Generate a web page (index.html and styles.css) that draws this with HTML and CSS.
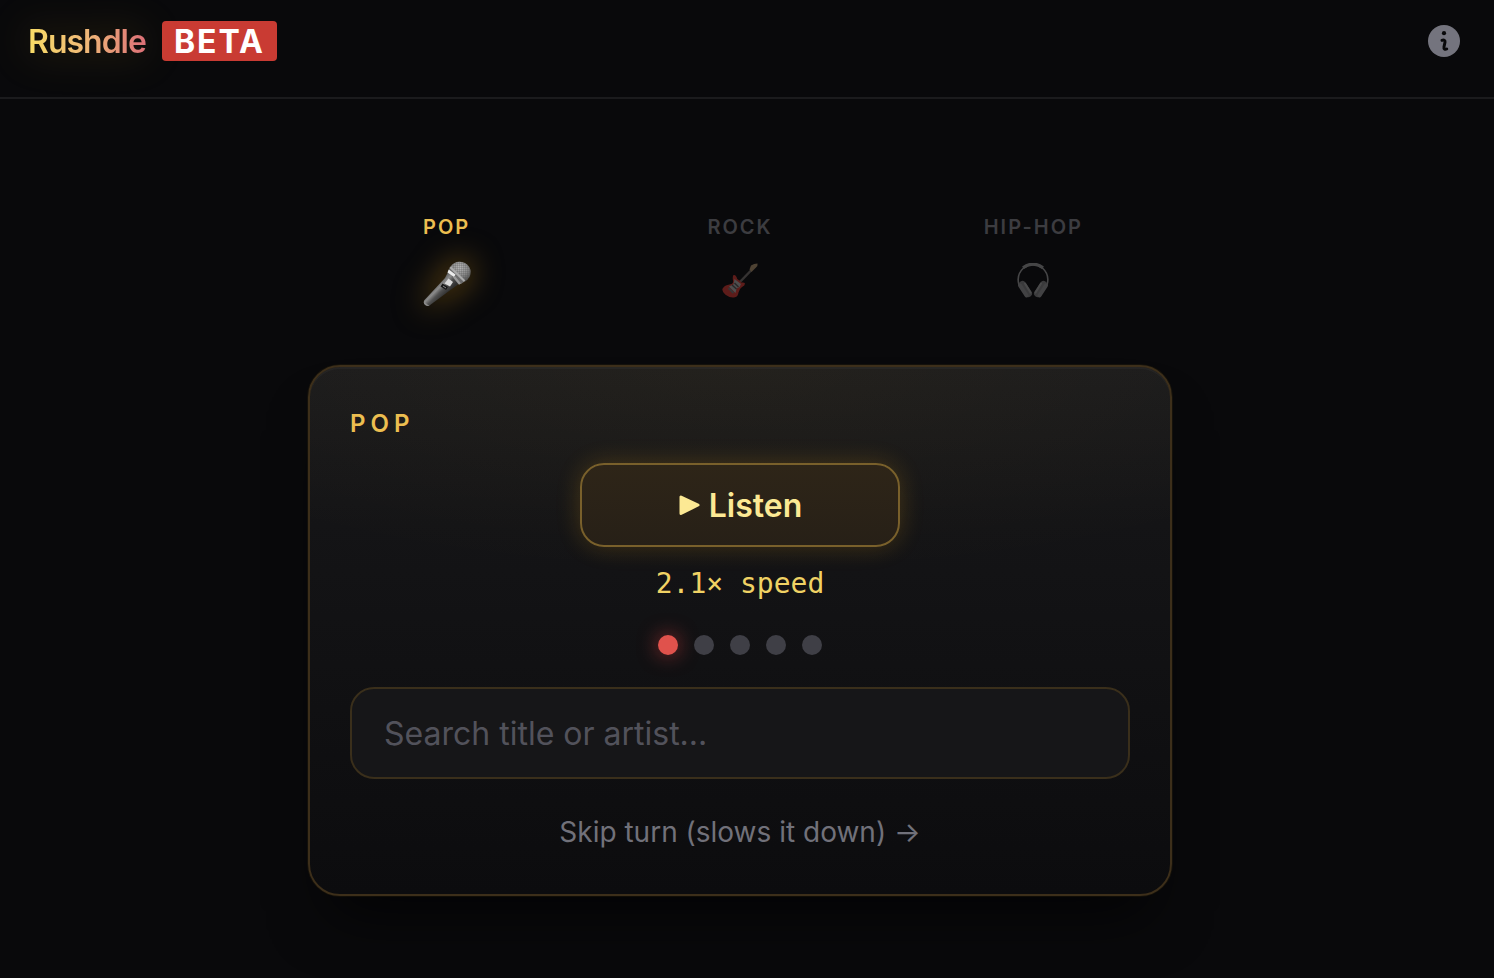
FILE: index.html
```html
<!DOCTYPE html>
<html lang="en">
<head>
<meta charset="utf-8">
<meta name="viewport" content="width=device-width, initial-scale=1">
<title>Rushdle</title>
<link rel="stylesheet" href="styles.css">
</head>
<body>
<header class="header">
  <h1 class="brand"><span class="logo">Rushdle</span><span class="badge">BETA</span></h1>
  <button class="info" type="button" aria-label="About">
    <svg viewBox="0 0 32 32" width="32" height="32" aria-hidden="true">
      <circle cx="16" cy="16" r="16" fill="#74747e"/>
      <circle cx="16" cy="8.200" r="2.100" fill="#09090b"/>
      <path d="M14 15.300c1.800-.9 3.400 0 3 1.900l-1 4.600c-.4 2 1 3 2.700 2.200" fill="none" stroke="#09090b" stroke-width="3" stroke-linecap="round"/>
    </svg>
  </button>
</header>
<main class="main">
  <nav class="tabs" aria-label="Genres">
    <button class="tab tab-active" type="button">
      <span class="tab-label">POP</span>
      <svg class="tab-icon mic" viewBox="0 0 48 48" aria-hidden="true">
        <defs>
          <linearGradient id="micBody" x1="11" y1="23" x2="22" y2="34" gradientUnits="userSpaceOnUse">
            <stop offset="0" stop-color="#4c4c4c"/><stop offset=".4" stop-color="#8b8b8b"/><stop offset=".65" stop-color="#505050"/><stop offset="1" stop-color="#303030"/>
          </linearGradient>
          <radialGradient id="micHead" cx=".45" cy=".3" r=".75">
            <stop offset="0" stop-color="#b9b9b9"/><stop offset=".55" stop-color="#8c8c8c"/><stop offset="1" stop-color="#4a4a4a"/>
          </radialGradient>
          <pattern id="mesh" width="2" height="2" patternUnits="userSpaceOnUse">
            <path d="M0 0h2M0 0v2" stroke="#555" stroke-width=".5"/>
          </pattern>
        </defs>
        <path d="M25.500 10l11 12.500-5 3.500L6.500 44.500q-2 1-4.300-.6t-.9-4.600L22 17z" fill="url(#micBody)"/>
        <path d="M1.500 39.500q1 3.500 5 5-2 1-4.300-.6t-.7-4.400z" fill="#8a8a8a"/>
        <path d="M27.500 5.500Q32-.5 39 1q6.500 1.500 8.500 8 1 7.500-5.500 11.500Z" fill="url(#micHead)"/>
        <path d="M27.500 5.500Q32-.5 39 1q6.500 1.500 8.500 8 1 7.500-5.500 11.500Z" fill="url(#mesh)"/>
        <path d="M27 6l14.500 14.500-3.500 2.500L25 11z" fill="#6b6b6b"/>
        <path d="M28 5.200l14.200 14.100-1.200 1.700L26.500 7z" fill="#aaa"/>
        <path d="M25.700 8.500l6.800 5-1.500 2.500-6.500-4.500z" fill="#ececec"/>
        <path d="M32 15l6 7.500-2 1.200-6-7.200z" fill="#999"/>
        <path d="M25.500 17.500l4.500 3.500-3 4.500-5.500-3z" fill="#dadada"/>
        <path d="M19.500 22.500l5.500 3.500-2 3-5.500-3.500z" fill="#171717"/>
        <path d="M20 25l3 2" stroke="#888" stroke-width="1"/>
      </svg>
    </button>
    <button class="tab" type="button">
      <span class="tab-label">ROCK</span>
      <svg class="tab-icon" viewBox="0 0 36 36" aria-hidden="true">
        <path d="M15 22L29 7.500" stroke="#77706c" stroke-width="2.500"/>
        <path d="M27.500 6.500l1.500-4q3-2 6.500-2 .5 2-1.500 4L29.500 9z" fill="#b59770"/>
        <path d="M11.500 12q2-.5 3 2 .5 3 2.500 3.200 1.500.3 2 2.300 3.500-.5 4 1 0 2-3 3.500-3 2-3.500 5.500-.5 4-3.500 4.800-5 1-9.500-2.500-3.800-3-3-6 2-3.500 6-4 5.500-.7 4.500-4.300-.7-4 .5-5.500z" fill="#dc3931"/>
        <path d="M12.500 16l6.500 5-1.500 3-3 1.500-1 4.500-6.500-6.500 4.500-2z" fill="#b8b5b2"/>
        <path d="M10 22l4.500 4m-2-6l4 4" stroke="#555" stroke-width="1.500"/>
        <path d="M6.500 25l5 5" stroke="#777" stroke-width="2"/>
      </svg>
    </button>
    <button class="tab" type="button">
      <span class="tab-label">HIP-HOP</span>
      <svg class="tab-icon" viewBox="0 0 36 36" aria-hidden="true">
        <path d="M4 22Q1 12 8.500 5q9.500-6 19 0 7.500 7 4.500 17" fill="none" stroke="#a2a2a2" stroke-width="1.600"/>
        <path d="M8 4.800q10-7.500 20 0" fill="none" stroke="#a0a0a0" stroke-width="3"/>
        <g stroke-linecap="round">
          <path d="M7.500 21.500l6 9M28.500 21.500l-6 9" stroke="#858585" stroke-width="7"/>
          <path d="M5 22.500l6.500 10M31 22.500l-6.500 10" stroke="#999" stroke-width="4"/>
          <path d="M10 20.500l5.500 9M26 20.500l-5.500 9" stroke="#aaa" stroke-width="2"/>
        </g>
      </svg>
    </button>
  </nav>
  <section class="card">
    <h2 class="card-title">POP</h2>
    <button class="listen" type="button">
      <svg viewBox="0 0 22 22" width="22" height="22" aria-hidden="true"><path d="M3 3v16.500L20 11z" fill="#fce994" stroke="#fce994" stroke-width="3" stroke-linejoin="round"/></svg>
      <span>Listen</span>
    </button>
    <p class="speed">2.1× speed</p>
    <div class="dots" role="img" aria-label="Attempt 1 of 5">
      <span class="dot dot-on"></span><span class="dot"></span><span class="dot"></span><span class="dot"></span><span class="dot"></span>
    </div>
    <input class="search" type="text" placeholder="Search title or artist..." aria-label="Search title or artist">
    <button class="skip" type="button">Skip turn (slows it down) →</button>
  </section>
</main>
</body>
</html>
```
FILE: styles.css
```css
* { box-sizing: border-box; }
body {
  margin: 0;
  min-height: 100vh;
  background: #09090b;
  font-family: Inter, sans-serif;
}
button {
  padding: 0;
  border: 0;
  background: none;
  color: inherit;
  font-family: inherit;
  cursor: pointer;
}
.header {
  display: flex;
  justify-content: space-between;
  align-items: flex-start;
  padding: 21px 34px 36px 28px;
  border-bottom: 2px solid #1b1b1d;
}
.brand {
  display: flex;
  gap: 16px;
  margin: 0;
  font-size: 32px;
  line-height: 38px;
}
.logo,
.badge { padding-top: 2px; }
.logo {
  background: linear-gradient(90deg, #f8dc66, #f0b878 50%, #dc6f77);
  background-clip: text;
  -webkit-background-clip: text;
  color: transparent;
  font-weight: 600;
  letter-spacing: -1px;
  filter: drop-shadow(0 0 20px rgba(250, 190, 36, 0.25));
}
.badge {
  padding-right: 12px;
  padding-left: 12px;
  border-radius: 4px;
  background: #c93b33;
  color: #fff;
  font-weight: 700;
  letter-spacing: 2px;
}
.info { display: flex; margin-top: 4px; }
.main {
  display: flex;
  flex-direction: column;
  align-items: center;
  gap: 56px;
  padding: 112px 14px 80px 0;
}
.tabs {
  display: grid;
  grid-template-columns: repeat(3, 1fr);
  width: 100%;
  max-width: 880px;
}
.tab {
  display: flex;
  flex-direction: column;
  align-items: center;
  gap: 20px;
  color: #3c3c40;
}
.tab-label {
  font-size: 20px;
  line-height: 32px;
  font-weight: 600;
  letter-spacing: 2px;
}
.tab-icon { width: 36px; height: 36px; opacity: 0.4; }
.tab-active { gap: 18px; color: #ecbe50; }
.mic {
  width: 48px;
  height: 48px;
  opacity: 1;
  filter: drop-shadow(0 0 16px rgba(251, 176, 24, 0.5));
}
.card {
  display: flex;
  flex-direction: column;
  align-items: center;
  width: 100%;
  max-width: 864px;
  padding: 40px;
  border: 2px solid #3d2f1a;
  border-radius: 32px;
  background:
    radial-gradient(ellipse 80% 40% at 50% 0, rgba(251, 191, 36, 0.04), transparent),
    linear-gradient(180deg, #1b1b1d, #141416 30%, #0c0c0e);
  box-shadow:
    0 0 0 1px rgba(251, 191, 36, 0.05),
    inset 0 2px 0 rgba(255, 255, 255, 0.03),
    0 40px 60px -24px rgba(0, 0, 0, 0.7);
}
.card-title {
  align-self: flex-start;
  margin: 0 0 22px;
  color: #ecbe50;
  font-size: 24px;
  line-height: 34px;
  font-weight: 600;
  letter-spacing: 5px;
}
.listen {
  display: flex;
  justify-content: center;
  align-items: center;
  gap: 9px;
  width: 320px;
  height: 84px;
  border: 2px solid #79602b;
  border-radius: 24px;
  background: linear-gradient(180deg, #2e2518, #272017);
  box-shadow: 0 0 24px rgba(251, 176, 24, 0.2);
  color: #fce994;
  font-size: 32px;
  font-weight: 600;
}
.speed {
  margin: 16px 0 30px;
  color: #f0d264;
  font-family: "DejaVu Sans Mono", monospace;
  font-size: 28px;
  line-height: 42px;
}
.dots { display: flex; gap: 16px; margin-bottom: 32px; }
.dot {
  width: 20px;
  height: 20px;
  border-radius: 50%;
  background: #3f3f46;
}
.dot-on {
  background: #e0524c;
  box-shadow: 0 0 20px rgba(239, 68, 68, 0.6);
}
.search {
  width: 100%;
  height: 92px;
  padding: 0 32px;
  border: 2px solid #3a2f1b;
  border-radius: 24px;
  outline: 0;
  background: #161618;
  color: #f4f4f5;
  font-family: inherit;
  font-size: 32px;
}
.search::placeholder { color: #52525b; opacity: 1; }
.skip {
  margin-top: 32px;
  color: #71717a;
  font-size: 28px;
  line-height: 43px;
}
```
